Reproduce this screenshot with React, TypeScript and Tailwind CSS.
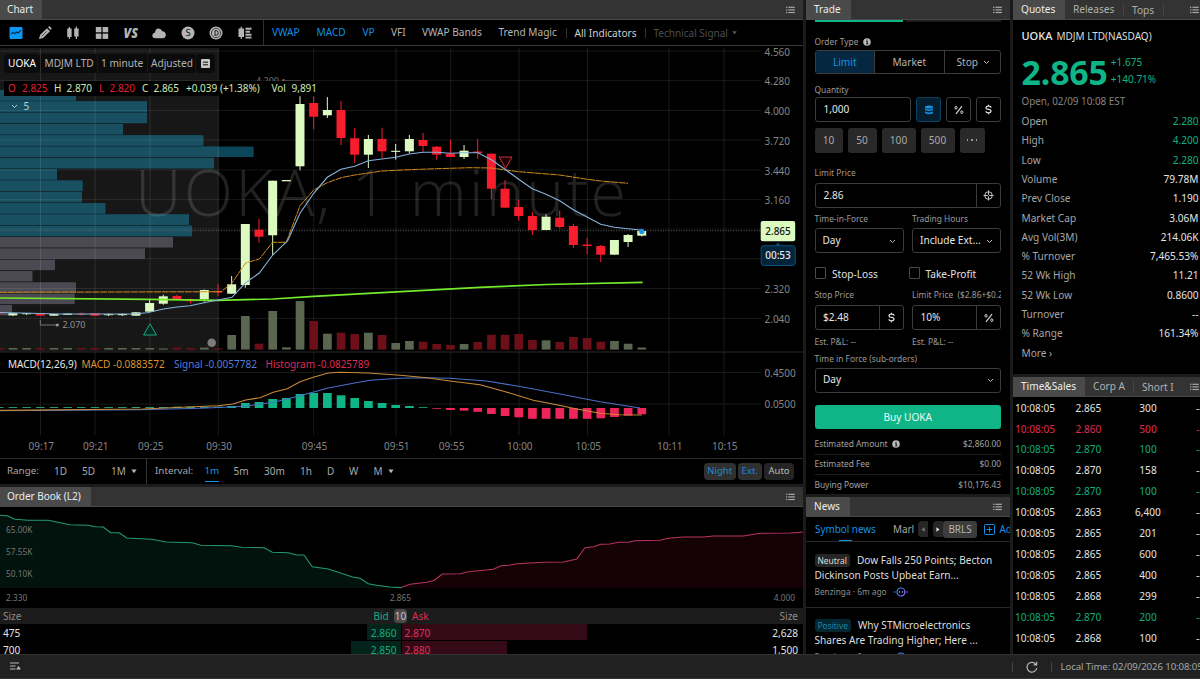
import type { ReactNode } from "react";

const STEP = 13.67;
const X0 = 300;
const UP = "#dcf9c0";
const DOWN = "#f81d2d";

const cx = (k: number) => X0 + k * STEP;

// k, high, low, body top, body bottom, direction, volume top
type Candle = [number, number, number, number, number, "u" | "d", number];

const candles: Candle[] = [
  [-22, 312, 314, 312.3, 313.6, "d", 348],
  [-21, 313, 316, 313.2, 315.4, "u", 348],
  [-20, 313, 315, 313.2, 314.2, "u", 348],
  [-19, 313, 316, 313.4, 315.6, "d", 348],
  [-18, 314, 316, 314, 315.7, "u", 348],
  [-17, 313.5, 315, 313.6, 314.8, "u", 348],
  [-16, 312.5, 315.5, 313.6, 314.6, "d", 348],
  [-15, 313, 316, 313.4, 315.7, "d", 348],
  [-14, 313.5, 316, 314.2, 315.2, "u", 348],
  [-13, 313.5, 316, 314, 315.2, "u", 348],
  [-12, 312, 316, 312.3, 315.7, "u", 348],
  [-11, 300, 312, 303, 311.7, "u", 348],
  [-10, 294.7, 304.7, 296.3, 303.7, "u", 348.4],
  [-9, 294.7, 300, 296, 299, "d", 347.6],
  [-8, 298.5, 303.5, 300.2, 301.2, "d", 348],
  [-7, 289.5, 301.7, 290, 299.3, "u", 347.6],
  [-6, 284, 296, 291, 292.5, "d", 348.4],
  [-5, 276, 293.7, 284.3, 293.7, "u", 335],
  [-4, 224, 287.7, 224, 285, "u", 316],
  [-3, 218.7, 242.7, 229.7, 236.7, "d", 343.7],
  [-2, 180.7, 255.3, 180.7, 235.3, "u", 311],
  [-1, 180, 181, 180, 181.3, "u", 347.3],
  [0, 96.3, 170.3, 104, 166.3, "u", 301],
  [1, 96.3, 129.3, 103, 116.7, "d", 321],
  [2, 97, 118, 110, 115.3, "u", 333.7],
  [3, 101, 145, 110, 138, "d", 332.7],
  [4, 128.3, 163, 138.3, 154.7, "d", 334],
  [5, 135, 168, 139, 154.7, "u", 332.7],
  [6, 127.7, 158, 139, 151.3, "d", 335],
  [7, 144, 159.7, 150.8, 151.9, "u", 343],
  [8, 135, 153.3, 139, 151.3, "u", 341],
  [9, 133, 151.7, 140, 146, "d", 341.7],
  [10, 146, 159.7, 146.7, 154.7, "d", 344],
  [11, 139.7, 157, 153.7, 157, "d", 345],
  [12, 145, 159, 150.7, 157, "u", 344],
  [13, 139, 159, 151.5, 153, "d", 342],
  [14, 153.7, 199, 153.7, 188.7, "d", 334.7],
  [15, 180, 207.7, 188.7, 207.7, "d", 334.7],
  [16, 200, 220.7, 207, 216, "d", 334],
  [17, 212, 235, 216, 230, "d", 340],
  [18, 214.3, 230, 216.7, 230, "u", 340.3],
  [19, 210.7, 228.7, 217.7, 227, "d", 342],
  [20, 224, 248, 226, 245, "d", 337],
  [21, 237.7, 254.3, 244.5, 246, "d", 338],
  [22, 245, 262, 246, 254.7, "d", 341.7],
  [23, 240, 254.7, 240, 254.7, "u", 341],
  [24, 234, 247, 235, 242, "u", 343.7],
  [25, 231, 236.5, 231, 235.7, "u", 347.5],
];

// widths of the volume profile rows, top to bottom
const profile = [76, 147, 147, 123, 203.3, 253.7, 214, 57, 82.5, 82, 105.3, 189, 192, 173, 145, 55, 32.5, 76, 74.7, 12];

// MACD histogram edges, positive above 408, negative below
const histogram: [number, number][] = [
  [-5, 406], [-4, 403], [-3, 402], [-2, 399], [-1, 398], [0, 394], [1, 393], [2, 393], [3, 395.3], [4, 398],
  [5, 401], [6, 403], [7, 405], [8, 406], [9, 407.2], [10, 408.8], [11, 410], [12, 410.7], [13, 411.8], [14, 414],
  [15, 416], [16, 417.3], [17, 418.8], [18, 418.8], [19, 418.8], [20, 418.8], [21, 418.8], [22, 418.3], [23, 417], [24, 415.7], [25, 414.3],
];

const times: [number, string][] = [
  [40.5, "09:17"], [95, "09:21"], [150, "09:25"], [218.3, "09:30"], [313.7, "09:45"], [396, "09:51"],
  [450.8, "09:55"], [519, "10:00"], [587.5, "10:05"], [669, "10:11"], [724, "10:15"],
];

const prices: [number, string][] = [
  [51, "4.560"], [80.6, "4.280"], [110.4, "4.000"], [140, "3.720"], [170, "3.440"], [199.6, "3.160"],
  [229, ""], [258.7, ""], [288.5, "2.320"], [318.4, "2.040"],
];

const stats = [
  ["Open", "2.280", true], ["High", "4.200", true], ["Low", "2.280", true], ["Volume", "79.78M"], ["Prev Close", "1.190"],
  ["Market Cap", "3.06M"], ["Avg Vol(3M)", "214.06K"], ["% Turnover", "7,465.53%"], ["52 Wk High", "11.21"],
  ["52 Wk Low", "0.8600"], ["Turnover", "--"], ["% Range", "161.34%"],
] as [string, string, boolean?][];

const sales = [
  ["2.865", "300", "w"], ["2.860", "500", "r"], ["2.870", "100", "g"], ["2.870", "158", "w"], ["2.870", "100", "g"], ["2.863", "6,400", "w"],
  ["2.865", "201", "w"], ["2.865", "600", "w"], ["2.865", "400", "w"], ["2.868", "299", "w"], ["2.870", "200", "g"], ["2.868", "100", "w"],
];

const saleColors: Record<string, string> = {
  w: "text-[#e4e4e4]",
  r: "text-[#e02a55]",
  g: "text-[#12ae82]",
};

function ListIcon({ className = "" }: { className?: string }) {
  return (
    <svg className={`shrink-0 ${className}`} width="9" height="8" viewBox="0 0 9 8" fill="#a8a8a8">
      {[0.7, 3.3, 5.9].map((y) => (
        <g key={y}>
          <rect x="0" y={y} width="1.4" height="1.2" />
          <rect x="2.4" y={y} width="6.4" height="1.2" />
        </g>
      ))}
    </svg>
  );
}

function Chevron({ color = "#bdbdbd" }: { color?: string }) {
  return (
    <svg className="shrink-0" width="7" height="5" viewBox="0 0 7 5" fill="none" stroke={color}>
      <path d="M1 1l2.5 2.5L6 1" />
    </svg>
  );
}

function Caret({ color = "#b5b5b5", size = 6 }: { color?: string; size?: number }) {
  return (
    <svg className="shrink-0" width={size} height={size * 0.75} viewBox="0 0 8 6">
      <path d="M0.5 0.5h7L4 5.5z" fill={color} />
    </svg>
  );
}

function Info() {
  return (
    <svg className="mb-px" width="8" height="8" viewBox="0 0 8 8">
      <circle cx="4" cy="4" r="3.8" fill="#b9b9b9" />
      <path d="M3.2 3.4h1.1v2.4M3.1 5.9h2.1" stroke="#000" strokeWidth="0.9" fill="none" />
      <circle cx="4" cy="2" r="0.6" fill="#000" />
    </svg>
  );
}

function PanelHeader({ title, tabClass }: { title: string; tabClass: string }) {
  return (
    <div className="flex h-5 shrink-0 items-center justify-between border-b border-[#484848] bg-[#333333] pr-[8px]">
      <div className={`flex h-full items-center bg-[#4a4a4a] pt-px text-[10.1px] text-[#ececec] ${tabClass}`}>{title}</div>
      <ListIcon />
    </div>
  );
}

const toolIcons: ReactNode[] = [
  <g key="line">
    <rect x="0.5" y="1" width="13" height="12" rx="1" fill="#0a96f5" />
    <path d="M2 8.2l2-2 1.5 1.6L7.5 6 9 7.2l3-3" stroke="#062a4a" strokeWidth="1.1" fill="none" />
  </g>,
  <g key="pen" fill="#b4b4b4">
    <path d="M1 13l1-4 7-6.8 3 3L5 12z" />
    <path d="M10 1.3l.8-.8q.6-.4 1.2.1l1.4 1.4q.4.6 0 1.1l-.7.8z" />
    <path d="M3.6 10.4l5-5" stroke="#000" strokeWidth="0.6" />
  </g>,
  <g key="candle" fill="#b4b4b4">
    <rect x="1.2" y="2.5" width="4.4" height="8.5" />
    <rect x="2.8" y="1" width="1.2" height="12" />
    <rect x="8.2" y="2.5" width="4.4" height="8" />
    <rect x="9.8" y="0.5" width="1.2" height="12.5" />
  </g>,
  <g key="grid" fill="#b4b4b4">
    <rect x="0.8" y="1" width="5.6" height="5.3" />
    <rect x="7.6" y="1" width="5.6" height="5.3" />
    <rect x="0.8" y="7.6" width="5.6" height="5.3" />
    <rect x="7.6" y="7.6" width="5.6" height="5.3" />
  </g>,
  <text key="vs" x="-0.5" y="12" fontSize="13.5" fontWeight="800" fontStyle="italic" fill="#b4b4b4" fontFamily="Open Sans, sans-serif" textLength="14.5" lengthAdjust="spacingAndGlyphs">VS</text>,
  <path key="cloud" fill="#b4b4b4" d="M3 12.3a3 3 0 0 1-2.7-3Q.4 6.8 3 6.4 3.4 2.6 6.6 2.4q2.6 0 3.6 2.9 3.5.3 3.6 3.6-.1 3-3 3.4z" />,
  <g key="s">
    <circle cx="7" cy="7" r="6.5" fill="#b4b4b4" />
    <text x="7" y="10.4" textAnchor="middle" fontSize="9.5" fill="#111" fontFamily="Noto Sans, sans-serif">S</text>
  </g>,
  <g key="d">
    <circle cx="7" cy="7" r="6.5" fill="#b4b4b4" />
    <circle cx="7" cy="7" r="4.6" fill="none" stroke="#111" strokeWidth="0.7" />
    <path d="M6 4.5v5M6 4.7h1.2a2 2.2 0 0 1 0 4.5H6" fill="none" stroke="#111" strokeWidth="0.9" />
  </g>,
  <g key="bars" fill="#b4b4b4">
    <rect x="0.5" y="2.5" width="5.5" height="8.5" />
    <rect x="2.6" y="0.8" width="1.3" height="12" />
    <rect x="7.5" y="1.7" width="6" height="2" />
    <rect x="7.5" y="4.7" width="4.5" height="2" />
    <rect x="7.5" y="7.7" width="6" height="2" />
    <rect x="7.5" y="10.7" width="6" height="1.8" />
  </g>,
];

function Toolbar() {
  return (
    <div className="flex h-[26px] shrink-0 items-center border-b border-[#3a3a3a] text-[10.1px] whitespace-nowrap text-[#b5b5b5]">
      <div className="flex w-[263px] pl-[2px]">
        {toolIcons.map((icon, i) => (
          <div key={i} className="flex w-[28.6px] shrink-0 justify-center">
            <svg width="14" height="14" viewBox="0 0 14 14">{icon}</svg>
          </div>
        ))}
      </div>
      <div className="h-full w-px bg-[#2e2e2e]" />
      <span className="w-[44.5px] pl-[8px] text-[#0d8fe8]">VWAP</span>
      <span className="w-[46px] pl-[8px] text-[#0d8fe8]">MACD</span>
      <span className="w-[28.5px] pl-[8px] text-[#0d8fe8]">VP</span>
      <span className="w-[31px] pl-[8px]">VFI</span>
      <span className="w-[76.5px] pl-[8px]">VWAP Bands</span>
      <span className="w-[75px] pl-[8px]">Trend Magic</span>
      <span className="w-[79px] border-l border-[#333] pl-[8px] leading-[10px] text-[#cfcfcf]">All Indicators</span>
      <span className="flex items-center gap-1 border-l border-[#333] pl-[8px] text-[10px] leading-[10px] text-[#4e4e4e]">
        Technical Signal <Caret color="#5a5a5a" size={5} />
      </span>
    </div>
  );
}

function PriceChart() {
  return (
    <svg className="absolute inset-0" width="803" height="412" viewBox="0 46 803 412" fontFamily="Noto Sans, Open Sans, sans-serif">
      <rect x="0" y="48" width="218.5" height="303.5" fill="#171717" />

      {profile.map((w, i) => {
        const y = 90 + i * 11.31;
        return (
          <g key={i}>
            <rect x="0" y={y} width={w} height="10.5" fill={i < 13 ? "#0b465a" : "#4b4a52"} />
            {i < 13 && <rect x="0" y={y} width={Math.min(w, 218.5)} height="10.5" fill="#185062" />}
          </g>
        );
      })}

      {times.map(([x]) => (
        <g key={x} fill="#fff" fillOpacity="0.1">
          <rect x={x - 0.5} y="48" width="1" height="303" />
          <rect x={x - 0.5} y="352" width="1" height="83" />
        </g>
      ))}
      {prices.map(([y]) => (
        <rect key={y} x="0" y={y - 0.5} width="761" height="1" fill="#fff" fillOpacity="0.09" />
      ))}
      <rect x="0" y="351.5" width="803" height="1" fill="#2a2a2a" />
      <rect x="0" y="372" width="761" height="1" fill="#191919" />
      <rect x="0" y="403.6" width="761" height="1" fill="#191919" />

      <text x="135" y="215.5" fontSize="64.5" fontWeight="300" fontFamily="Open Sans, sans-serif" fill="#fff" fillOpacity="0.13" textLength="491">
        UOKA, 1 minute
      </text>
      <path d="M0 230.7H761" stroke="#6a6a6a" strokeWidth="0.9" strokeDasharray="1 1.6" />

      {candles.map(([k, hi, lo, top, bottom, dir, vol]) => (
        <g key={k}>
          <rect x={cx(k) - 4.3} y={vol} width="8.7" height={349.6 - vol} fill={dir === "u" ? "#5a6650" : "#6c0f18"} />
          <rect x={cx(k) - 0.5} y={hi} width="1" height={lo - hi} fill={dir === "u" ? UP : DOWN} />
          <rect x={cx(k) - 4.5} y={top} width="9" height={bottom - top} fill={dir === "u" ? UP : DOWN} />
        </g>
      ))}

      <polyline
        fill="none" stroke="#d18a1f" strokeWidth="1" strokeDasharray="7 0.7"
        points="0,292.3 221,291.7 231.7,283.3 245.7,263 259.3,259 272.7,242.3 286.3,242.3 300,205.7 313.7,190 327.3,182.7 341,177.7 354.7,175 382,171 409.3,169.7 436.7,168.7 470,167.7 491,168 518.7,171.7 559.7,175 587,179.3 600.7,181 628,183.3"
      />
      <polyline
        fill="none" stroke="#74ea2c" strokeWidth="1.7"
        points="0,298 150,299.3 218,300.4 272.7,299 313.7,296.3 368.3,293.3 480,287.3 546.7,284.5 642.7,282.3"
      />
      <polyline
        fill="none" stroke="#86b4dd" strokeWidth="1.1"
        points="0,312.5 60,314 133,314 147,312.7 163.6,309 177,307 190,305.7 204,302.7 218,300 232,297.3 245.7,282.7 259.3,273 272.7,255 287.7,240.7 300,213.3 313.7,193.3 327.3,177.3 341,169.3 354.7,166.3 368.3,160.7 382,159 395.7,157.3 409.3,154 423,152.3 436.7,152.3 450,153.3 464,152.7 478,152.7 491.3,159.7 505,169.3 518.7,179.3 532.3,188.7 546,194.3 559.7,200.7 573.3,209.7 587,217 600.7,224.3 614.3,227.3 628,228.7 641,230"
      />
      <circle cx="641.8" cy="231.4" r="2.6" fill="#1a93e8" />

      <path d="M150 323.8l-6.5 11.2h13z" fill="#07291f" stroke="#12a87b" strokeWidth="1" />
      <path d="M499.2 157h12.8l-6.4 11.6z" fill="#1c0407" stroke="#e0303c" strokeWidth="0.9" />
      <path d="M40.3 320v5H57" fill="none" stroke="#8a8a8a" strokeWidth="0.8" />
      <circle cx="57.3" cy="325" r="1.6" fill="#9a9a9a" />
      <text x="62.5" y="328.2" fontSize="9" fill="#8f8f8f">2.070</text>
      <text x="256" y="84" fontSize="9" fill="#6f6f6f">4.200</text>
      <circle cx="283.5" cy="80.5" r="1.5" fill="#6a6a6a" />
      <path d="M284 80.5H301" stroke="#4a4a4a" strokeWidth="0.8" />
      <circle cx="211.7" cy="342.7" r="4.3" fill="#7c7c7c" />

      {/* MACD pane */}
      {Array.from({ length: 17 }, (_, i) => i - 22).map((k) => (
        <rect key={k} x={cx(k) - 4.3} y={k < -9 ? 407 : 406.6} width="8.6" height={k < -9 ? 1 : 1.4} fill="#1f9a78" />
      ))}
      {histogram.map(([k, v]) => (
        <rect key={k} x={cx(k) - 4.3} y={Math.min(v, 408)} width="8.7" height={Math.abs(v - 408)} fill={v < 408 ? "#0fb586" : "#ee2558"} />
      ))}
      <polyline
        fill="none" stroke="#4a6fc8" strokeWidth="1.1"
        points="0,410.7 140,409.8 200,408.3 230,407 246.7,406 273.3,402.3 287.3,399 300,395.7 328.3,388 353.3,383.3 370,380.3 400,378.3 425,377.7 450,378.3 486.7,381 518.7,386.3 560,394 600,401.7 640,408"
      />
      <polyline
        fill="none" stroke="#c98a35" strokeWidth="1.1"
        points="0,410.4 143,409 187,407 218,405.7 233,404 245.7,400 260,397.7 273.3,392.3 287.3,388.7 300,381.7 313.3,377.3 328.3,373 340,372.3 368.3,373 400,375.3 426.7,377.7 450,381 480,384.7 505.3,391.7 533.3,400.3 556.7,404.7 576.7,409 600,413.3 620,414.7 641.7,415"
      />

      <g fontSize="10" fill="#858585">
        {prices.map(([y, label]) => (
          <text key={y} x="764.5" y={y + 4.7}>{label}</text>
        ))}
        <text x="764.5" y="376.7">0.4500</text>
        <text x="764.5" y="408.2">0.0500</text>
        {times.map(([x, label]) => (
          <text key={x} x={x + 0.8} y="449.8" textAnchor="middle">{label}</text>
        ))}
      </g>

      <rect x="760.7" y="221" width="34.5" height="20.3" rx="2" fill="#dcf9c0" />
      <text x="778" y="235" textAnchor="middle" fontSize="10" fontWeight="500" fill="#161616">2.865</text>
      <path d="M775 245.5l3-3 3 3z" fill="#0b4a70" />
      <rect x="761.2" y="245.7" width="34" height="19.8" rx="2.5" fill="#04243b" stroke="#0d5179" />
      <text x="778" y="259.4" textAnchor="middle" fontSize="10" fontWeight="500" fill="#e6e6e6">00:53</text>
    </svg>
  );
}

function ChartPanel() {
  return (
    <section className="flex h-[484px] flex-col bg-black">
      <PanelHeader title="Chart" tabClass="w-[42px] pl-[7px]" />
      <Toolbar />
      <div className="relative h-[412px] shrink-0">
        <PriceChart />
        {/* legend floating over the plot */}
        <div className="absolute top-[8px] left-[4px] flex h-[19px] items-center gap-px text-[10.1px] whitespace-nowrap text-[#b4b4b4]">
          <span className="flex h-full w-[36px] items-center rounded-sm bg-[#0b0b0b] pt-px pl-[4px] text-white">UOKA</span>
          <span className="flex h-full w-[56px] items-center bg-[#0b0b0b] pt-px pl-[3.5px]">MDJM LTD</span>
          <span className="flex h-full w-[49px] items-center bg-[#0b0b0b] pt-px pl-[3px]">1 minute</span>
          <span className="flex h-full w-[47px] items-center bg-[#0b0b0b] pt-px pl-[3px]">Adjusted</span>
          <span className="flex h-full w-[19px] items-center rounded-sm bg-[#0b0b0b] pl-[5px]">
            <svg width="9" height="9" viewBox="0 0 9 9">
              <rect width="9" height="9" rx="1" fill="#c6c6c6" />
              <path d="M2 3.2h5M2 5.8h5" stroke="#111" />
            </svg>
          </span>
        </div>
        <div className="absolute top-[35px] left-[4px] flex h-[15px] w-[314px] items-center bg-black pl-[4px] text-[10px] whitespace-nowrap text-[#cfeab6]">
          <span className="w-[14px] text-[#e0202f]">O</span>
          <span className="w-[32px] text-[#e0202f]">2.825</span>
          <span className="w-[12.5px]">H</span>
          <span className="w-[32.5px]">2.870</span>
          <span className="w-[10.5px] text-[#e0202f]">L</span>
          <span className="w-[32.5px] text-[#e0202f]">2.820</span>
          <span className="w-[11.5px]">C</span>
          <span className="w-[32.5px]">2.865</span>
          <span className="w-[85.5px]">+0.039 (+1.38%)</span>
          <span className="w-[20px]">Vol</span>
          <span>9,891</span>
        </div>
        <div className="absolute top-[53.5px] left-[11px] flex h-[14px] items-center gap-[5.5px] text-[10px] text-[#b9ccd3]">
          <Chevron color="#b9ccd3" />5
        </div>
        <div className="absolute top-[311px] left-[8px] flex h-[14px] items-center text-[10px] whitespace-nowrap">
          <span className="w-[73.5px] text-[#e8e8e8]">MACD(12,26,9)</span>
          <span className="w-[92.5px] text-[#dd9336]">MACD -0.0883572</span>
          <span className="w-[91.5px] text-[#567cd8]">Signal -0.0057782</span>
          <span className="text-[#da2c5a]">Histogram -0.0825789</span>
        </div>
      </div>
      <div className="flex h-[26px] shrink-0 items-center border-t border-[#2a2a2a] pl-[7px] text-[10px] whitespace-nowrap text-[#a9a9a9]">
        <span className="w-[47px] text-[9.8px]">Range:</span>
        <span className="w-[28px]">1D</span>
        <span className="w-[29px]">5D</span>
        <span className="flex w-[35px] items-center gap-[5px]">1M <Caret /></span>
        <span className="h-full w-px bg-[#333]" />
        <span className="w-[57.5px] pl-[8px] text-[9.8px]">Interval:</span>
        <span className="flex h-full w-[29px]">
          <span className="flex h-[22.5px] items-center self-start border-b-[1.5px] border-[#1592e6] pt-[4px] text-[9.8px] text-[#1592e6]">1m</span>
        </span>
        <span className="w-[30.5px]">5m</span>
        <span className="w-[36px]">30m</span>
        <span className="w-[27px]">1h</span>
        <span className="w-[22px]">D</span>
        <span className="w-[24.5px]">W</span>
        <span className="flex items-center gap-[5px]">M <Caret /></span>
        <span className="ml-auto flex h-[16.5px] gap-[2px] pr-[9px] text-[9.5px]">
          <span className="flex w-[31.5px] items-center justify-center rounded-sm bg-[#303030] text-[#168ad8]">Night</span>
          <span className="flex w-[24.5px] items-center justify-center rounded-sm bg-[#303030] text-[#168ad8]">Ext.</span>
          <span className="flex w-[30px] items-center justify-center rounded-sm bg-[#242424] text-[#bbb]">Auto</span>
        </span>
      </div>
    </section>
  );
}

const bidLine =
  "0,515.3 7.3,515.7 15,519.3 28.3,520.3 48.3,520.3 70,524.7 88,525.3 95,526.7 103.3,527 110.7,532.7 119.3,532.7 126.7,538 151.7,539.3 166.7,542 192.3,542.7 200.7,545.3 231.7,545.7 241.7,547.3 264.3,547.7 272.3,552.3 288.3,552.7 296.7,555 304,555 312.3,566.7 328.3,569 352.7,577 360,578.3 368.3,583.7 376.7,585.3 390,587 401,587.6";
const askLine =
  "401,587.6 410,584.3 426.7,582.3 434.3,580.3 442.3,574 460,573.7 468.3,571.7 493.3,569.3 501,565.7 509.3,565.3 516.7,563.7 543.3,562.3 563.3,562 576.7,559 585,547.7 593.3,546.7 600.7,544.3 610,544 618.3,542.3 628.3,542.3 635,540.7 660,540.3 668.3,538.3 683.3,537 703.3,537 713.3,536 743.3,536 760,533.3 790,533 803,532";

function OrderBook() {
  return (
    <section className="mt-[3px] flex h-[167px] flex-col overflow-hidden bg-black">
      <PanelHeader title="Order Book (L2)" tabClass="w-[91px] pl-[7px] tracking-[-0.05px]" />
      <svg className="shrink-0" width="803" height="101" viewBox="0 507 803 101" fontFamily="Noto Sans, Open Sans, sans-serif">
        <polygon points={`${bidLine} 401,588 0,588`} fill="#02120d" />
        <polygon points={`${askLine} 803,588 401,588`} fill="#150207" />
        <polyline points={bidLine} fill="none" stroke="#26987a" strokeWidth="1.1" />
        <polyline points={askLine} fill="none" stroke="#b8355a" strokeWidth="1.1" />
        <g fontSize="8.3" fill="#767676">
          <text x="6" y="532.6">65.00K</text>
          <text x="6" y="554.8">57.55K</text>
          <text x="6" y="577">50.10K</text>
          <text x="6" y="601">2.330</text>
          <text x="400.5" y="601" textAnchor="middle">2.865</text>
          <text x="795" y="601" textAnchor="end">4.000</text>
        </g>
      </svg>
      <div className="flex h-4 shrink-0 items-center bg-[#1c1c1c] px-[3px] text-[10px] text-[#8b8b8b]">
        <span className="w-[370.5px]">Size</span>
        <span className="w-[20.5px] text-[#12ae82]">Bid</span>
        <span className="flex h-[14px] w-[13px] items-center justify-center rounded-sm bg-[#4a4a4a] text-[#c4c4c4]">10</span>
        <span className="pl-[5px] text-[#d92e5a]">Ask</span>
        <span className="ml-auto pr-[2px]">Size</span>
      </div>
      <div className="flex shrink-0 flex-col gap-px text-[10.1px] text-[#e4e4e4]">
        <div className="flex h-4 items-center px-[3px] leading-[14px]">
          <span className="w-[364px] pt-[2px]">475</span>
          <span className="flex h-full w-[33.5px] items-center justify-end bg-[#04241b] pt-[2px] pr-[4px] text-[#12ae82]">2.860</span>
          <span className="ml-px flex h-full w-[185.5px] items-center bg-[#340a16] pt-[2px] pl-[3px] text-[#e0305c]">2.870</span>
          <span className="ml-auto pt-[2px] pr-[2px]">2,628</span>
        </div>
        <div className="flex h-4 items-center px-[3px] leading-[14px]">
          <span className="w-[348px] pt-[2px]">700</span>
          <span className="flex h-full w-[49.5px] items-center justify-end bg-[#04241b] pt-[2px] pr-[4px] text-[#12ae82]">2.850</span>
          <span className="ml-px flex h-full w-[105.5px] items-center bg-[#340a16] pt-[2px] pl-[3px] text-[#e0305c]">2.880</span>
          <span className="ml-auto pt-[2px] pr-[2px]">1,500</span>
        </div>
      </div>
    </section>
  );
}

function Label({ children, className = "" }: { children: ReactNode; className?: string }) {
  return <div className={`flex h-[14px] items-center pt-px text-[8.4px] whitespace-nowrap text-[#9c9c9c] ${className}`}>{children}</div>;
}

const box = "flex h-[25px] items-center rounded-[3px] border border-[#3c3c3c] text-[10.1px] text-[#e6e6e6]";

function Target() {
  return (
    <svg width="11" height="11" viewBox="0 0 11 11" fill="none" stroke="#c4c4c4">
      <circle cx="5.5" cy="5.5" r="3.8" />
      <path d="M5.5 0.5v4.3M5.5 6.2v4.3M0.5 5.5h4.3M6.2 5.5h4.3" />
    </svg>
  );
}

function Percent() {
  return (
    <svg width="10" height="10" viewBox="0 0 10 10" fill="none" stroke="#dedede">
      <path d="M8 1.2L2 8.8" strokeWidth="1.1" />
      <rect x="1" y="1.5" width="2" height="2.6" rx="1" />
      <rect x="6.8" y="5.9" width="2" height="2.6" rx="1" />
    </svg>
  );
}

function Dollar() {
  return (
    <svg width="9" height="11" viewBox="0 0 9 11" fill="none" stroke="#dedede" strokeWidth="1.2">
      <path d="M7 3.8Q7 2.2 4.5 2.2T2 3.8Q2 5.2 4.5 5.4T7 7.1Q7 8.8 4.5 8.8T2 7.2M4.5 0.7v1.5M4.5 8.8v1.5" />
    </svg>
  );
}

function TradePanel() {
  return (
    <section className="flex h-[494px] flex-col overflow-hidden bg-black">
      <PanelHeader title="Trade" tabClass="w-[45px] pl-[8px]" />
      <div className="flex flex-col pr-[9px] pl-[8.5px]">
        <div className="flex h-[2px] gap-[3px]">
          <div className="w-[88.5px] bg-[#0fb586]" />
          <div className="flex-1 bg-[#1d1d1d]" />
        </div>
        <Label className="mt-[12.5px] gap-[4.5px]">Order Type <Info /></Label>
        <div className="mt-[1.5px] flex h-[24px] rounded-[3px] border border-[#3c3c3c] text-[10.1px] text-[#b4b4b4]">
          <span className="flex w-[58.5px] items-center justify-center bg-[#052740] pt-px text-[#1592e6]">Limit</span>
          <span className="flex w-[69.5px] items-center justify-center border-l border-[#3c3c3c] pt-px">Market</span>
          <span className="flex flex-1 items-center justify-center gap-[5px] border-l border-[#3c3c3c] pt-px pl-[2px]">Stop <Chevron /></span>
        </div>
        <Label className="mt-[8.5px]">Quantity</Label>
        <div className="mt-[0.5px] flex gap-[5px]">
          <div className={`w-[96.5px] pt-px pl-[8px] ${box}`}>1,000</div>
          <div className="flex h-[25px] w-[25px] items-center justify-center rounded-[3px] border border-[#0c4266] bg-[#041e30]">
            <svg width="10" height="10" viewBox="0 0 10 10" fill="#1592e6">
              <ellipse cx="5" cy="2" rx="4" ry="1.6" />
              <path d="M1 3.2q4 2.4 8 0v1.9q-4 2.2-8 0zM1 6.2q4 2.4 8 0V8q-4 2.6-8 0z" />
            </svg>
          </div>
          <div className={`w-[25px] justify-center ${box}`}><Percent /></div>
          <div className={`w-[25px] justify-center ${box}`}><Dollar /></div>
        </div>
        <div className="mt-[5.5px] flex h-[25px] gap-[5px] text-[10.1px] text-[#a8a8a8]">
          <span className="flex w-[28px] items-center justify-center rounded-[3px] bg-[#292929] pt-px">10</span>
          <span className="flex w-[29px] items-center justify-center rounded-[3px] bg-[#292929] pt-px">50</span>
          <span className="flex w-[34px] items-center justify-center rounded-[3px] bg-[#292929] pt-px">100</span>
          <span className="flex w-[34px] items-center justify-center rounded-[3px] bg-[#292929] pt-px">500</span>
          <span className="flex w-[25px] items-center justify-center gap-[3px] rounded-[3px] bg-[#292929]">
            <i className="size-[1.5px] rounded-full bg-[#b8b8b8]" />
            <i className="size-[1.5px] rounded-full bg-[#b8b8b8]" />
            <i className="size-[1.5px] rounded-full bg-[#b8b8b8]" />
          </span>
        </div>
        <Label className="mt-[13px]">Limit Price</Label>
        <div className={`mt-[3.5px] pl-[8px] ${box}`}>
          <span className="flex-1 pt-px">2.86</span>
          <span className="flex h-full w-[24.5px] items-center justify-center border-l border-[#3c3c3c]"><Target /></span>
        </div>
        <div className="mt-[4px] grid grid-cols-2 gap-[8.5px]">
          <div>
            <Label>Time-in-Force</Label>
            <div className={`mt-[2px] justify-between pt-px pr-[7px] pl-[7px] ${box}`}>Day <Chevron /></div>
          </div>
          <div>
            <Label>Trading Hours</Label>
            <div className={`mt-[2px] justify-between pt-px pr-[7px] pl-[7px] ${box}`}>Include Ext... <Chevron /></div>
          </div>
        </div>
        <div className="mt-[14px] flex h-[12px] items-center text-[10.1px] leading-[12px] text-[#e2e2e2]">
          <span className="size-[11.5px] rounded-[1px] border border-[#4a4a4a]" />
          <span className="w-[82.5px] pt-px pl-[6px]">Stop-Loss</span>
          <span className="size-[11.5px] rounded-[1px] border border-[#4a4a4a]" />
          <span className="pt-px pl-[5.5px]">Take-Profit</span>
        </div>
        <div className="mt-[8.5px] grid grid-cols-2 gap-[8.5px]">
          <div>
            <Label>Stop Price</Label>
            <div className={`mt-[3.5px] pl-[7.5px] ${box}`}>
              <span className="flex-1 pt-px">$2.48</span>
              <span className="flex h-full w-[24px] items-center justify-center border-l border-[#3c3c3c]"><Dollar /></span>
            </div>
            <Label className="mt-[4.5px]">Est. P&amp;L: --</Label>
          </div>
          <div>
            <Label className="overflow-hidden">Limit Price&nbsp; ($2.86+$0.20)</Label>
            <div className={`mt-[3.5px] pl-[7.5px] ${box}`}>
              <span className="flex-1 pt-px">10%</span>
              <span className="flex h-full w-[24px] items-center justify-center border-l border-[#3c3c3c]"><Percent /></span>
            </div>
            <Label className="mt-[4.5px]">Est. P&amp;L: --</Label>
          </div>
        </div>
        <Label className="mt-[3px]">Time in Force (sub-orders)</Label>
        <div className={`mt-[2px] justify-between pr-[6px] pl-[7.5px] ${box}`}>Day <Chevron /></div>
        <div className="mt-[12.5px] flex h-[23.5px] items-center justify-center rounded-[3px] bg-[#0fb586] pt-px text-[10.1px] text-[#eefaf5]">Buy UOKA</div>
        <div className="mt-[6px] text-[8.4px] text-[#a2a2a2]">
          <div className="flex h-[20px] items-center justify-between border-b border-[#1f1f1f] pt-[1.5px]">
            <span className="flex items-center gap-[4.5px]">Estimated Amount <Info /></span>
            <span>$2,860.00</span>
          </div>
          <div className="flex h-[20px] items-center justify-between border-b border-[#1f1f1f] pt-[1.5px]">
            <span>Estimated Fee</span>
            <span>$0.00</span>
          </div>
          <div className="flex h-[20px] items-center justify-between pt-px">
            <span>Buying Power</span>
            <span>$10,176.43</span>
          </div>
        </div>
      </div>
    </section>
  );
}

function Robot() {
  return (
    <svg width="14" height="10" viewBox="0 0 14 10" fill="none">
      <circle cx="7" cy="5" r="4" stroke="#3f7df0" strokeWidth="1.2" />
      <path d="M10.4 3a4 4 0 0 1-3.4 6" stroke="#8a4be0" strokeWidth="1.2" />
      <path d="M5.6 4v1.8M8.4 4v1.8" stroke="#6f9bff" strokeWidth="1" />
      <path d="M0.8 4v2M13.2 4v2" stroke="#3a6fd8" strokeWidth="1" />
    </svg>
  );
}

function NewsPanel() {
  return (
    <section className="mt-[3px] flex h-[157px] flex-col overflow-hidden bg-black">
      <PanelHeader title="News" tabClass="w-[44px] pl-[8px]" />
      <div className="flex h-[25px] w-[204px] shrink-0 items-center overflow-hidden border-b border-[#2a2a2a] pl-[9px] text-[9.9px] whitespace-nowrap text-[#a6a6a6]">
        <span className="relative flex h-full w-[78px] shrink-0 items-center pt-px text-[#1592e6]">
          Symbol news
          <i className="absolute bottom-0 left-[24px] h-[1.5px] w-[13px] bg-[#1592e6]" />
        </span>
        <span className="w-[24.5px] shrink-0 pt-px">Marl</span>
        <span className="flex h-[16px] w-[10.5px] shrink-0 items-center justify-center rounded-l-sm bg-[#262626]">
          <svg width="4" height="5" viewBox="0 0 4 5"><path d="M3.6 0.2v4.6L0.4 2.5z" fill="#777" /></svg>
        </span>
        <span className="ml-[5px] flex h-[16px] w-[10px] shrink-0 items-center justify-center rounded-l-sm bg-[#262626]">
          <svg width="4" height="5" viewBox="0 0 4 5"><path d="M0.4 0.2v4.6l3.2-2.3z" fill="#ddd" /></svg>
        </span>
        <span className="mt-[0.5px] flex h-[16.5px] w-[34px] shrink-0 items-center justify-center rounded-[3px] bg-[#3c3c3c] text-[#b5b5b5]">BRLS</span>
        <svg className="mt-[0.5px] mr-[4.5px] ml-[7px] shrink-0" width="11" height="11" viewBox="0 0 11 11" fill="none" stroke="#1592e6">
          <rect x="0.5" y="0.5" width="10" height="10" rx="1" />
          <path d="M5.5 2.8v5.4M2.8 5.5h5.4" />
        </svg>
        <span className="shrink-0 pt-px text-[#1592e6]">Add</span>
      </div>
      <article className="h-[66px] shrink-0 border-b border-[#2a2a2a] pt-[11px] pl-[8.5px] text-[10.1px] leading-[14.5px] text-[#dedede]">
        <div className="flex h-[14.5px] items-center">
          <span className="mr-[7px] h-[13.5px] rounded-[3px] bg-[#262626] px-[3px] text-[8.4px] leading-[14px]">Neutral</span>
          Dow Falls 250 Points; Becton
        </div>
        <p>Dickinson Posts Upbeat Earn...</p>
        <div className="mt-[3px] flex items-center gap-[7px] text-[8.3px] text-[#8e8e8e]">Benzinga · 6m ago <Robot /></div>
      </article>
      <article className="shrink-0 pt-[10px] pl-[8.5px] text-[10.1px] leading-[14.5px] text-[#dedede]">
        <div className="flex h-[14.5px] items-center">
          <span className="mr-[7px] h-[13.5px] rounded-[3px] bg-[#062632] px-[3px] text-[8.4px] leading-[14px] text-[#1487a8]">Positive</span>
          Why STMicroelectronics
        </div>
        <p>Shares Are Trading Higher; Here ...</p>
        <div className="mt-[3px] flex items-center gap-[7px] text-[8.3px] text-[#8e8e8e]">Benzinga · 8m ago <Robot /></div>
      </article>
    </section>
  );
}

function QuotesPanel() {
  return (
    <section className="flex h-[374px] flex-col overflow-hidden bg-black">
      <div className="flex h-5 shrink-0 items-center border-b border-[#484848] bg-[#333] text-[10.1px] text-[#b0b0b0]">
        <span className="flex h-full w-[52px] items-center bg-[#4a4a4a] pt-px pl-[8px] text-[#ececec]">Quotes</span>
        <span className="w-[58px] pt-px pl-[8px]">Releases</span>
        <span className="w-[40px] border-l border-[#444] pl-[8px] leading-[12px]">Tops</span>
        <span className="h-3 w-[27px] border-l border-[#444]" />
        <ListIcon />
      </div>
      <div className="flex flex-col pr-[1.5px] pl-[8.5px]">
        <div className="mt-[8px] flex h-[16px] items-center gap-[4px] whitespace-nowrap">
          <span className="text-[11px] font-medium text-[#e8e8e8]">UOKA</span>
          <span className="pt-px text-[10px] text-[#dcdcdc]">MDJM LTD(NASDAQ)</span>
        </div>
        <div className="mt-[10px] flex h-[36px] items-center gap-[3px] text-[#0fb586]">
          <span className="text-[33.8px] leading-[36px] font-bold tracking-[-0.1px]">2.865</span>
          <span className="-mt-[3px] flex flex-col text-[10px] leading-[16.5px]">
            <span>+1.675</span>
            <span>+140.71%</span>
          </span>
        </div>
        <div className="mt-[4px] flex h-[14px] items-center text-[9.9px] text-[#858585]">Open, 02/09 10:08 EST</div>
        <div className="mt-[4px] text-[10.1px] text-[#a6a6a6]">
          {stats.map(([name, value, green]) => (
            <div key={name} className="flex h-[19.3px] items-center justify-between">
              <span>{name}</span>
              <span className={green ? "text-[#12ae82]" : "text-[#e4e4e4]"}>{value}</span>
            </div>
          ))}
          <div className="flex h-[19.3px] items-center">More ›</div>
        </div>
      </div>
    </section>
  );
}

function SalesPanel() {
  return (
    <section className="mt-[3px] flex h-[277px] flex-col overflow-hidden bg-black">
      <div className="mb-[0.7px] flex h-5 shrink-0 items-center border-b border-[#484848] bg-[#333] text-[10.1px] whitespace-nowrap text-[#b0b0b0]">
        <span className="flex h-full w-[72px] items-center bg-[#4a4a4a] pt-px pl-[8px] text-[#ececec]">Time&amp;Sales</span>
        <span className="w-[48px] pt-px pl-[8px]">Corp A</span>
        <span className="w-[57px] border-l border-[#444] pl-[8px] leading-[12px]">Short I</span>
        <ListIcon />
      </div>
      {sales.map(([price, size, tone], i) => (
        <div key={i} className={`flex h-[20.95px] shrink-0 items-center pl-[2px] text-[10.1px] ${saleColors[tone]}`}>
          <span className="w-[49px]">10:08:05</span>
          <span className="w-[49px] text-center">{price}</span>
          <span className="w-[70px] text-center">{size}</span>
          <span className="ml-auto w-[4px] overflow-hidden whitespace-nowrap">--</span>
        </div>
      ))}
    </section>
  );
}

function StatusBar() {
  return (
    <footer className="flex h-[25px] items-center border-y border-[#333] bg-[#212121] pl-[10px] text-[9.6px] whitespace-nowrap text-[#a8a8a8]">
      <svg width="11" height="9" viewBox="0 0 11 9" stroke="#b8b8b8" fill="#b8b8b8">
        <path d="M0 1h9M0 4h5.5M0 7h5.5" strokeWidth="1.1" />
        <path d="M6.7 7.2L8.5 4.2l1.8 3z" strokeWidth="0.6" />
      </svg>
      <span className="ml-auto h-[10px] w-px bg-[#444]" />
      <svg className="mx-[13px]" width="12" height="12" viewBox="0 0 11 11" fill="none" stroke="#b8b8b8" strokeWidth="1.1">
        <path d="M9.3 3.4a4.5 4.5 0 1 0 .6 3M9.8 0.8v2.8H7" />
      </svg>
      <span className="h-[10px] w-px bg-[#444]" />
      <span className="w-[148px] pt-px pl-[8.5px] tracking-[-0.08px]">Local Time: 02/09/2026 10:08:05</span>
    </footer>
  );
}

export default function App() {
  return (
    <div className="flex h-[679px] w-[1200px] flex-col overflow-hidden bg-[#1b1b1b] font-['Noto_Sans','Open_Sans',sans-serif]">
      <main className="flex h-[654px] gap-[3px]">
        <div className="flex w-[803px] shrink-0 flex-col">
          <ChartPanel />
          <OrderBook />
        </div>
        <div className="flex w-[204px] shrink-0 flex-col">
          <TradePanel />
          <NewsPanel />
        </div>
        <div className="flex w-[187px] shrink-0 flex-col">
          <QuotesPanel />
          <SalesPanel />
        </div>
      </main>
      <StatusBar />
    </div>
  );
}
